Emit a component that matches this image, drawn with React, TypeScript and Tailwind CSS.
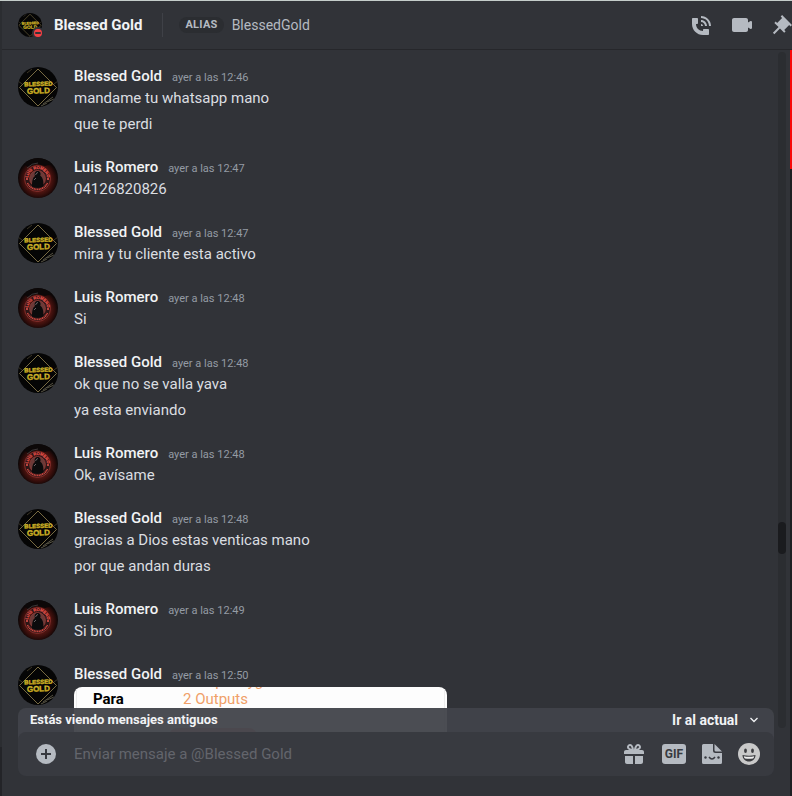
import type { ReactNode } from "react";

type Author = "blessed" | "luis";

interface MessageGroup {
  author: Author;
  time: string;
  lines: string[];
  attachment?: boolean;
}

const names: Record<Author, string> = {
  blessed: "Blessed Gold",
  luis: "Luis Romero",
};

const groups: MessageGroup[] = [
  { author: "blessed", time: "12:46", lines: ["mandame tu whatsapp mano", "que te perdi"] },
  { author: "luis", time: "12:47", lines: ["04126820826"] },
  { author: "blessed", time: "12:47", lines: ["mira y tu cliente esta activo"] },
  { author: "luis", time: "12:48", lines: ["Si"] },
  { author: "blessed", time: "12:48", lines: ["ok que no se valla yava", "ya esta enviando"] },
  { author: "luis", time: "12:48", lines: ["Ok, avísame"] },
  {
    author: "blessed",
    time: "12:48",
    lines: ["gracias a Dios estas venticas mano", "por que andan duras"],
  },
  { author: "luis", time: "12:49", lines: ["Si bro"] },
  { author: "blessed", time: "12:50", lines: [], attachment: true },
];

function BlessedAvatar({ className }: { className: string }) {
  return (
    <svg viewBox="0 0 40 40" className={className} aria-hidden="true">
      <defs>
        <linearGradient id="gold" x1="0" y1="0" x2="0" y2="1">
          <stop offset="0" stopColor="#e8d648" />
          <stop offset="1" stopColor="#b8960f" />
        </linearGradient>
        <clipPath id="disc">
          <circle cx="20" cy="20" r="20" />
        </clipPath>
      </defs>
      <g clipPath="url(#disc)">
        <rect width="40" height="40" fill="#050505" />
        <path d="M20 2 38.500 20.500 20 39 1.500 20.500Z" fill="none" stroke="#85764a" strokeWidth="0.9" />
        <path d="M25 37 35 30M29 35l7-3M23 39l6-3" stroke="#6f6a56" strokeWidth="0.8" />
        <path d="M9 6l5-4M0 14 4 17M36 17l4-3" stroke="#4b4430" strokeWidth="0.8" />
        <g
          fill="url(#gold)"
          stroke="#c9ac22"
          strokeWidth="0.4"
          textAnchor="middle"
          fontFamily="Liberation Sans, sans-serif"
          fontWeight="700"
        >
          <text x="20.500" y="19" fontSize="6" transform="rotate(-2 20 19)">
            BLESSED
          </text>
          <text x="20.500" y="26.500" fontSize="8" transform="rotate(-2 20 27)">
            GOLD
          </text>
        </g>
      </g>
    </svg>
  );
}

function LuisAvatar({ className }: { className: string }) {
  return (
    <svg viewBox="0 0 40 40" className={className} aria-hidden="true">
      <defs>
        <radialGradient id="ember" cx="0.5" cy="0.54" r="0.5">
          <stop offset="0" stopColor="#1b1112" />
          <stop offset="0.65" stopColor="#4c1410" />
          <stop offset="0.85" stopColor="#2a0b09" />
          <stop offset="1" stopColor="#0b0606" />
        </radialGradient>
        <path id="arc" d="M10 20.500a9.500 9.500 0 0 1 19 0" />
      </defs>
      <circle cx="20" cy="20" r="20" fill="url(#ember)" />
      <path d="M6 6a20 20 0 0 1 28 0l-7 2-8-2-9 3Z" fill="#0c0808" />
      <path d="M9 10q5-5 11-5" stroke="#5d5557" strokeWidth="0.6" fill="none" />
      <circle cx="19.500" cy="20.500" r="13" fill="#2c1616" stroke="#a83a35" strokeWidth="0.7" />
      <circle cx="19.500" cy="20.500" r="8" fill="#6b3a38" stroke="#a83a35" strokeWidth="0.6" />
      <text
        fill="#e85048"
        stroke="#e85048"
        strokeWidth="0.2"
        fontSize="4"
        fontWeight="700"
        fontFamily="Liberation Sans, sans-serif"
      >
        <textPath href="#arc" startOffset="50%" textAnchor="middle">
          LUIS ROMERO
        </textPath>
      </text>
      <path
        d="M9.500 25a11 11 0 0 0 20 0"
        fill="none"
        stroke="#cc4740"
        strokeWidth="1.800"
        strokeDasharray="1.200 0.500"
      />
      <circle cx="9" cy="21" r="1.100" fill="#dd524b" />
      <circle cx="30" cy="21" r="1.100" fill="#dd524b" />
      <path
        d="M14 28.500c0-5 .5-9 3-10.500-1-2.500.2-5 2.700-5 2.300 0 3.500 2.200 2.500 4.800 3 1.700 3.300 6.200 3.300 10.700-3.500 1.500-8 1.500-11.500 0Z"
        fill="#0b0b0c"
      />
      <path d="M17.500 17q1-2.500 2.500-2.500M16 22l2-2" stroke="#90878a" strokeWidth="0.7" fill="none" />
    </svg>
  );
}

function Avatar({ author, className }: { author: Author; className: string }) {
  return author === "blessed" ? (
    <BlessedAvatar className={className} />
  ) : (
    <LuisAvatar className={className} />
  );
}

function IconButton({ label, children }: { label: string; children: ReactNode }) {
  return (
    <button type="button" aria-label={label} className="shrink-0 text-[#b5bac1] hover:text-white">
      {children}
    </button>
  );
}

function Glyph({ d }: { d: string }) {
  return (
    <svg viewBox="0 0 24 24" className="block size-6" fill="currentColor" fillRule="evenodd">
      <path d={d} />
    </svg>
  );
}

const callPath =
  "M11 5V3C16.515 3 21 7.486 21 13H19C19 8.589 15.411 5 11 5ZM17 13H15C15 10.795 13.206 9 11 9V7C14.309 7 17 9.691 17 13ZM11 11V13H13C13 11.896 12.105 11 11 11ZM14 16H18C18.553 16 19 16.447 19 17V21C19 21.553 18.553 22 18 22H13C6.925 22 2 17.075 2 11V6C2 5.447 2.448 5 3 5H7C7.553 5 8 5.447 8 6V10C8 10.553 7.553 11 7 11H6C6.063 14.938 9 18 13 18V17C13 16.447 13.447 16 14 16Z";
const videoPath =
  "M21.526 8.149C21.231 7.966 20.862 7.951 20.553 8.105L18 9.382V7C18 5.897 17.103 5 16 5H4C2.897 5 2 5.897 2 7V17C2 18.104 2.897 19 4 19H16C17.103 19 18 18.104 18 17V14.618L20.553 15.894C20.694 15.965 20.847 16 21 16C21.183 16 21.365 15.949 21.526 15.851C21.82 15.668 22 15.347 22 15V9C22 8.653 21.82 8.332 21.526 8.149Z";
const pinPath =
  "M22 12L12.101 2.101L10.686 3.514L12.101 4.929L7.151 9.878V9.88L5.736 8.465L4.322 9.88L8.565 14.122L2.908 19.778L4.322 21.192L9.979 15.536L14.222 19.778L15.636 18.364L14.222 16.95L19.171 12H19.172L20.586 13.414L22 12Z";
const giftPath =
  "M16.886 8H20C21.104 8 22 8.896 22 10V12H2V10C2 8.896 2.897 8 4 8H7.114C6.663 7.764 6.236 7.477 5.879 7.121C4.709 5.951 4.709 4.048 5.879 2.879C7.012 1.746 8.986 1.746 10.121 2.877C11.758 4.514 11.979 7.595 11.998 7.941L12 8L12.002 7.942C12.022 7.596 12.242 4.515 13.879 2.878C15.014 1.745 16.986 1.746 18.121 2.877C19.29 4.049 19.29 5.952 18.121 7.121C17.764 7.477 17.337 7.764 16.886 8ZM7.293 5.707C6.903 5.316 6.903 4.682 7.293 4.292C7.481 4.103 7.732 4 8 4C8.268 4 8.519 4.103 8.707 4.292C9.297 4.882 9.641 5.94 9.825 6.822C8.945 6.639 7.879 6.293 7.293 5.707ZM14.174 6.824C14.359 5.941 14.702 4.883 15.293 4.293C15.481 4.103 15.732 4 16 4C16.268 4 16.519 4.103 16.706 4.291C17.096 4.682 17.097 5.316 16.707 5.707C16.116 6.298 15.057 6.642 14.174 6.824ZM3 14H11V22H5C3.897 22 3 21.104 3 20V14ZM13 14V22H19C20.104 22 21 21.104 21 20V14H13Z";

function Header() {
  return (
    <header className="flex h-[49px] shrink-0 items-center overflow-hidden border-b border-[#26272b] pl-4">
      <div className="relative shrink-0">
        <BlessedAvatar className="size-6" />
        <span className="absolute -right-[2px] -bottom-[2px] flex size-3 items-center justify-center rounded-full bg-[#313338]">
          <span className="flex size-2 items-center justify-center rounded-full bg-[#f23f43]">
            <span className="h-[2px] w-[6px] rounded-full bg-[#313338]" />
          </span>
        </span>
      </div>
      <h1 className="ml-3 text-[15px] font-bold whitespace-nowrap text-[#f2f3f5]">Blessed Gold</h1>
      <div className="mr-4 ml-5 h-6 w-px shrink-0 bg-[#3f4147]" />
      <span className="h-4 rounded-full bg-[#2b2d31] px-[6px] text-[11px] leading-4 font-bold tracking-wide text-[#b5bac1]">
        ALIAS
      </span>
      <span className="ml-2 text-sm text-[#b5bac1]">BlessedGold</span>
      <nav className="-mr-[2px] ml-auto flex shrink-0 gap-4">
        <IconButton label="Iniciar llamada de voz">
          <Glyph d={callPath} />
        </IconButton>
        <IconButton label="Iniciar videollamada">
          <Glyph d={videoPath} />
        </IconButton>
        <IconButton label="Mensajes fijados">
          <Glyph d={pinPath} />
        </IconButton>
      </nav>
    </header>
  );
}

function Attachment() {
  return (
    <div className="mt-[2px] flex h-80 w-full max-w-[373px] flex-col overflow-hidden rounded-lg bg-[#fdfdfd] px-[2px]">
      <div className="flex-1 border-x border-[#ececec] pl-4 text-[15px] leading-[18px]">
        <div className="-mt-[15px] ml-[90px] text-[#f0a068]">3Jaxp4nvyg</div>
        <dl className="flex">
          <dt className="w-[90px] font-bold text-black">Para</dt>
          <dd className="text-[#f0a068]">2 Outputs</dd>
        </dl>
        <div className="mt-5 ml-[76px] h-7 w-[88px] rounded-lg bg-[#f2a0a0]" />
      </div>
    </div>
  );
}

function Message({ group }: { group: MessageGroup }) {
  return (
    <li className="mb-[17px] flex gap-4 py-[2px] pl-4">
      <Avatar author={group.author} className="mt-[2px] size-10 shrink-0" />
      <div className="min-w-0 flex-1">
        <div className="flex h-[22px] items-baseline gap-[10px]">
          <h2 className="text-[15px] leading-[22px] font-medium text-[#f2f3f5]">{names[group.author]}</h2>
          <time className="text-[11px] leading-[22px] text-[#949ba4]">ayer a las {group.time}</time>
        </div>
        <div className="flex flex-col gap-1 text-[15px] leading-[22px] text-[#dbdee1]">
          {group.lines.map((line) => (
            <p key={line}>{line}</p>
          ))}
        </div>
        {group.attachment && <Attachment />}
      </div>
    </li>
  );
}

function Composer() {
  return (
    <footer className="relative shrink-0 pr-4 pb-5 pl-4">
      {/* notice slides out from behind the message box */}
      <div className="absolute inset-x-4 -top-6 flex h-10 items-start justify-between rounded-t-lg bg-[#41434a]/95 pr-4 pl-3 text-[13px] leading-6 font-bold text-[#f2f3f5]">
        <span>Estás viendo mensajes antiguos</span>
        <button type="button" className="flex items-center gap-3 text-sm leading-6">
          Ir al actual
          <svg viewBox="0 0 8 6" className="h-[6px] w-2" fill="none" stroke="currentColor" strokeWidth="1.300">
            <path d="M0.500 1 4 4.500 7.500 1" />
          </svg>
        </button>
      </div>
      <form className="relative flex h-11 items-center gap-4 rounded-lg bg-[#383a40] pr-[14px] pl-[18px]">
        <IconButton label="Adjuntar archivo">
          <svg viewBox="0 0 20 20" className="block size-5">
            <circle cx="10" cy="10" r="10" fill="currentColor" />
            <path d="M10 5v10M5 10h10" stroke="#383a40" strokeWidth="2" />
          </svg>
        </IconButton>
        <input
          type="text"
          aria-label="Enviar mensaje a @Blessed Gold"
          placeholder="Enviar mensaje a @Blessed Gold"
          className="ml-[2px] h-full min-w-0 flex-1 bg-transparent text-[15px] text-[#dbdee1] outline-none placeholder:text-[#63656c]"
        />
        <IconButton label="Enviar un regalo">
          <Glyph d={giftPath} />
        </IconButton>
        <button
          type="button"
          className="h-5 w-6 shrink-0 rounded-[3px] bg-[#b5bac1] text-center text-xs leading-5 font-bold text-[#383a40]"
        >
          GIF
        </button>
        <IconButton label="Abrir pegatinas">
          <svg viewBox="0 0 20 20" className="block size-5">
            <path
              d="M1.500 0H11v6.500A2.500 2.500 0 0 0 13.500 9H20v9.500a1.500 1.500 0 0 1-1.500 1.500h-17A1.500 1.500 0 0 1 0 18.500v-17A1.500 1.500 0 0 1 1.500 0Z"
              fill="currentColor"
            />
            <path d="M12.500 0 20 7.500h-6A1.500 1.500 0 0 1 12.500 6Z" fill="currentColor" />
            <circle cx="3.500" cy="13.500" r="1.200" fill="#383a40" />
            <circle cx="16.500" cy="13.500" r="1.200" fill="#383a40" />
            <path d="M7 13q3 4 6 0" fill="none" stroke="#383a40" strokeWidth="1.500" />
          </svg>
        </IconButton>
        <IconButton label="Elegir emoji">
          <svg viewBox="0 0 22 22" className="block size-[22px]">
            <circle cx="11" cy="11" r="11" fill="#c9c9c9" />
            <ellipse cx="7.500" cy="7.800" rx="1.400" ry="2.200" fill="#3c3d40" />
            <ellipse cx="14.500" cy="7.800" rx="1.400" ry="2.200" fill="#3c3d40" />
            <path d="M4.500 12q6.500 1.600 13 0c0 4-3 6.500-6.500 6.500S4.500 16 4.500 12Z" fill="#3c3d40" />
            <path d="M5.800 13.200q5.200 1 10.400 0-.3 1.800-1.200 2.200-4 .8-8 0-.9-.4-1.200-2.200Z" fill="#efefef" />
          </svg>
        </IconButton>
      </form>
    </footer>
  );
}

export default function App() {
  return (
    <div className="flex h-screen overflow-hidden border-t border-[#c5cdca] bg-[#313338] font-[Roboto,sans-serif]">
      <div className="flex w-[2px] shrink-0 flex-col bg-[#2b2d31]">
        <div className="mt-auto h-[49px] bg-[#232428]" />
      </div>
      <div className="flex min-w-0 flex-1 flex-col">
        <Header />
        <div className="flex min-h-0 flex-1">
          <main className="flex min-w-0 flex-1 flex-col">
            <div className="flex min-h-0 flex-1 overflow-hidden">
              <ol className="min-w-0 flex-1 pt-[13px]">
                {groups.map((group, i) => (
                  <Message key={i} group={group} />
                ))}
              </ol>
              <div className="mt-[2px] mr-1 mb-1 flex w-2 shrink-0 flex-col rounded-full bg-[#2b2d31]">
                <div className="basis-[69.5%]" />
                <div className="h-8 rounded-full bg-[#1a1b1e]" />
              </div>
            </div>
            <Composer />
          </main>
          <div className="w-[2px] shrink-0 bg-[#1e1f22]">
            <div className="h-[119px] bg-[#f80808]" />
          </div>
        </div>
      </div>
    </div>
  );
}
